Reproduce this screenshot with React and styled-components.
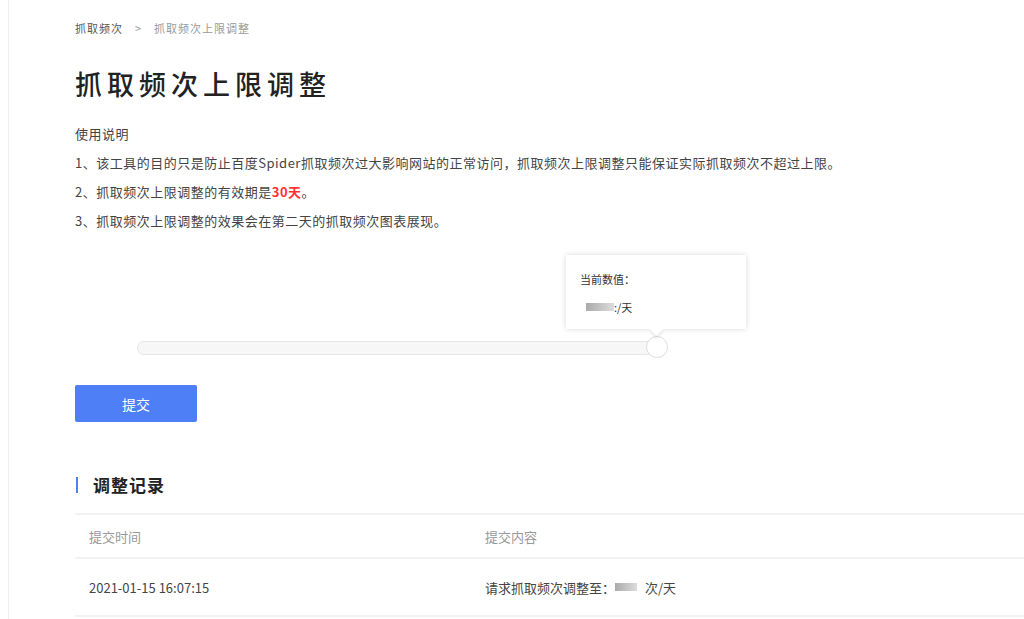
import React from 'react';
import styled, { createGlobalStyle } from 'styled-components';

const Global = createGlobalStyle`
  body {
    margin: 0;
    background: #fff;
    font-family: "Noto Sans CJK SC", "Noto Sans", sans-serif;
    color: #333;
  }
`;

const Page = styled.div`
  height: 619px;
  overflow: hidden;
  margin-left: 8px;
  border-left: 1px solid #eee;
  padding: 18px 0 0 66px;
`;

const Crumbs = styled.div`
  display: flex;
  align-items: center;
  gap: 12px;
  font-size: 11px;
  letter-spacing: 1px;
  color: #999;
  height: 20px;
`;

const CrumbHome = styled.span`
  color: #555;
`;

const Title = styled.h1`
  margin: 25px 0 0;
  font-size: 27px;
  font-weight: 500;
  letter-spacing: 5px;
  color: #222;
  line-height: 42px;
`;

const Notes = styled.div`
  margin-top: 14px;
  font-size: 13px;
  letter-spacing: 0.5px;
  color: #444;
  line-height: 29px;
`;

const Red = styled.span`
  color: #f33;
  font-weight: bold;
`;

const SliderArea = styled.div`
  position: relative;
  height: 112px;
  margin-top: 20px;
`;

const Track = styled.div`
  position: absolute;
  left: 62px;
  top: 86px;
  width: 520px;
  height: 12px;
  border: 1px solid #e6e6e6;
  border-radius: 7px;
  background: #f7f7f7;
`;

const Thumb = styled.div`
  position: absolute;
  left: 571px;
  top: 81px;
  width: 20px;
  height: 20px;
  border-radius: 50%;
  border: 1px solid #ddd;
  background: #fff;
`;

const Tip = styled.div`
  position: absolute;
  left: 491px;
  top: 0;
  width: 180px;
  height: 74px;
  box-sizing: border-box;
  background: #fff;
  box-shadow: 0 0 6px rgba(0,0,0,0.15);
  padding: 16px 14px;
  font-size: 11px;
  color: #333;
  &::after {
    content: '';
    position: absolute;
    left: 86px;
    bottom: -5px;
    width: 9px;
    height: 9px;
    background: #fff;
    transform: rotate(45deg);
    box-shadow: 2px 2px 3px rgba(0,0,0,0.08);
  }
`;

const TipValue = styled.div`
  display: flex;
  align-items: center;
  margin-top: 12px;
  padding-left: 6px;
`;

const Blur = styled.span`
  display: inline-block;
  width: ${p => p.w}px;
  height: 8px;
  background: linear-gradient(90deg, #aaa, #ddd);
  margin-right: ${p => p.gap || 0}px;
`;

const Button = styled.button`
  margin-top: 18px;
  width: 122px;
  height: 37px;
  border: none;
  border-radius: 2px;
  background: #4e7ff6;
  color: #fff;
  font-size: 14px;
  font-family: inherit;
`;

const Section = styled.div`
  margin-top: 50px;
  display: flex;
  align-items: center;
  font-size: 17px;
  font-weight: 600;
  letter-spacing: 1px;
  color: #222;
  &::before {
    content: '';
    width: 2px;
    height: 16px;
    background: #4e7ff6;
    margin: 0 15px 0 1px;
  }
`;

const Table = styled.div`
  margin-top: 16px;
  border-top: 2px solid #f2f2f2;
`;

const Row = styled.div`
  display: grid;
  grid-template-columns: 396px 1fr;
  height: ${p => p.h}px;
  align-items: center;
  padding-left: 14px;
  font-size: 13px;
  color: ${p => (p.head ? '#999' : '#444')};
  border-bottom: 2px solid #f2f2f2;
`;

const Cell = styled.div`
  display: flex;
  align-items: center;
`;

export default function App() {
  return (
    <>
      <Global />
      <Page>
        <Crumbs>
          <CrumbHome>抓取频次</CrumbHome>
          <span>&gt;</span>
          <span>抓取频次上限调整</span>
        </Crumbs>
        <Title>抓取频次上限调整</Title>
        <Notes>
          <div>使用说明</div>
          <div>1、该工具的目的只是防止百度Spider抓取频次过大影响网站的正常访问，抓取频次上限调整只能保证实际抓取频次不超过上限。</div>
          <div>2、抓取频次上限调整的有效期是<Red>30天</Red>。</div>
          <div>3、抓取频次上限调整的效果会在第二天的抓取频次图表展现。</div>
        </Notes>
        <SliderArea>
          <Track />
          <Thumb />
          <Tip>
            <div>当前数值：</div>
            <TipValue><Blur w={28} />:/天</TipValue>
          </Tip>
        </SliderArea>
        <Button>提交</Button>
        <Section>调整记录</Section>
        <Table>
          <Row head h={42}>
            <Cell>提交时间</Cell>
            <Cell>提交内容</Cell>
          </Row>
          <Row h={56}>
            <Cell>2021-01-15 16:07:15</Cell>
            <Cell>请求抓取频次调整至：<Blur w={22} gap={8} />次/天</Cell>
          </Row>
        </Table>
      </Page>
    </>
  );
}
